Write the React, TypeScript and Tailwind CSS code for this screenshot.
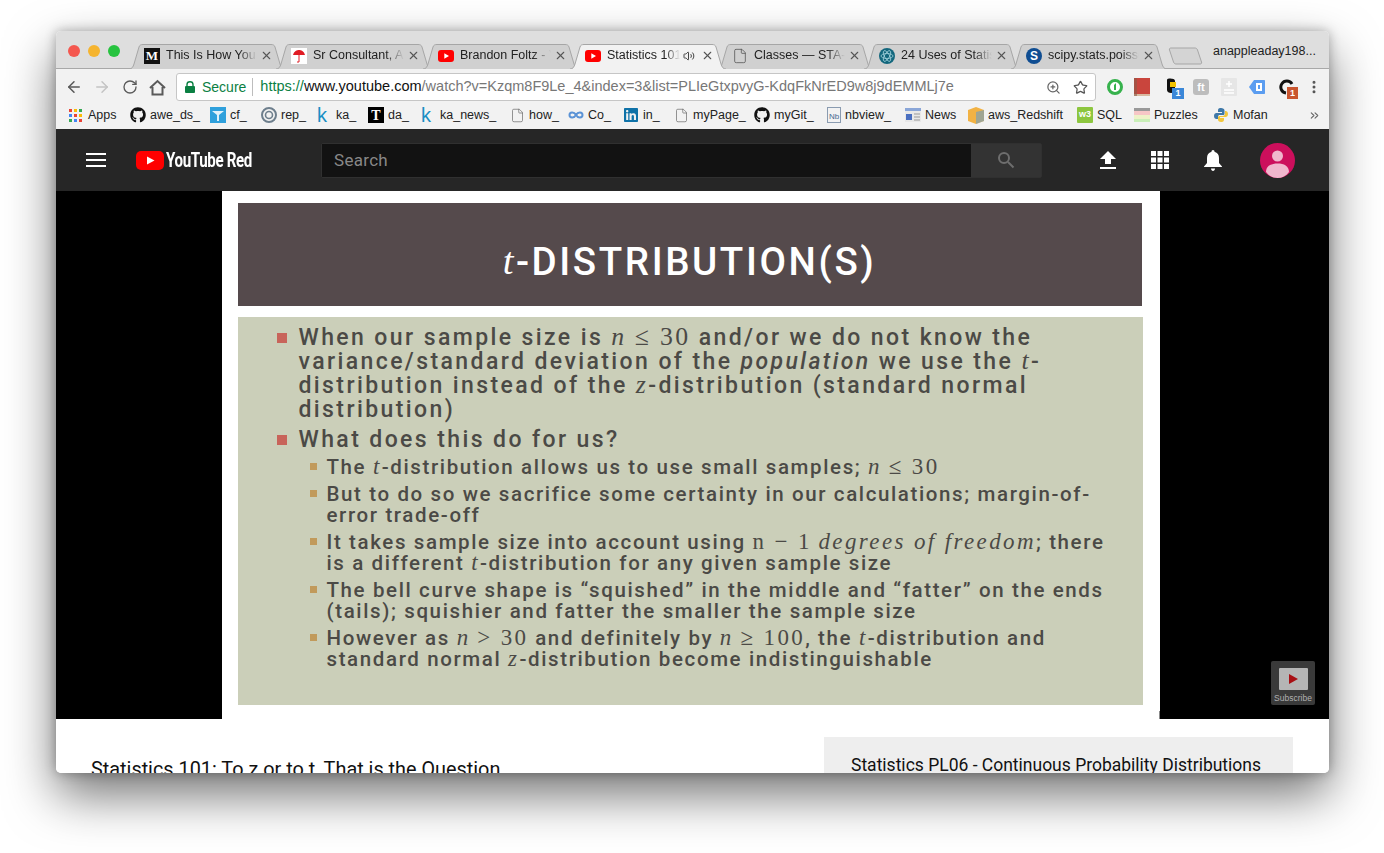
import React from "react";
import { ArrowLeft, ArrowRight, RotateCw, ZoomIn, Star, MoreVertical, X, Volume2, File, ChevronsRight } from "lucide-react";
import { FaGithub, FaLinkedin } from "react-icons/fa";

const YtIcon = () => (
  <svg width="16" height="12" viewBox="0 0 16 12" className="shrink-0">
    <rect width="16" height="12" rx="3" fill="#f00" />
    <path d="M6.3 3.2 L11 6 L6.3 8.8 Z" fill="#fff" />
  </svg>
);

const tabs: { icon: React.ReactNode; title: string; active?: boolean; sound?: boolean }[] = [
  {
    icon: <span className="flex h-4 w-4 shrink-0 items-center justify-center bg-[#111] font-['Liberation_Serif',serif] text-[13px] font-bold text-white">M</span>,
    title: "This Is How You Lie with Statistics",
  },
  {
    icon: (
      <svg width="16" height="16" viewBox="0 0 16 16" className="shrink-0">
        <rect width="16" height="16" fill="#fff" />
        <path d="M2 7 C3 3 6 2 8 2 C10 2 13 3 14 7 Z" fill="#e01c24" />
        <path d="M8 6 V14 H6" fill="none" stroke="#e01c24" strokeWidth="1" />
      </svg>
    ),
    title: "Sr Consultant, Analytics",
  },
  { icon: <YtIcon />, title: "Brandon Foltz - YouTube" },
  { icon: <YtIcon />, title: "Statistics 101: To z", active: true, sound: true },
  { icon: <File size={16} strokeWidth={1.2} className="shrink-0 text-[#555]" />, title: "Classes — STA-680" },
  {
    icon: (
      <svg width="16" height="16" viewBox="0 0 16 16" className="shrink-0">
        <circle cx="8" cy="8" r="8" fill="#13677d" />
        <g fill="none" stroke="#9fd0da" strokeWidth="0.8">
          <ellipse cx="8" cy="8" rx="6" ry="2.5" />
          <ellipse cx="8" cy="8" rx="6" ry="2.5" transform="rotate(60 8 8)" />
          <ellipse cx="8" cy="8" rx="6" ry="2.5" transform="rotate(120 8 8)" />
        </g>
      </svg>
    ),
    title: "24 Uses of Statistics",
  },
  {
    icon: (
      <span className="flex h-4 w-4 shrink-0 items-center justify-center rounded-full bg-[#0f4d92] font-['Liberation_Sans',sans-serif] text-[12px] font-bold text-white">S</span>
    ),
    title: "scipy.stats.poisson",
  },
];

function Tab({ icon, title, active, sound }: (typeof tabs)[number]) {
  return (
    <div className={`relative -ml-[9px] flex h-[25px] w-[156px] shrink-0 items-center pb-[2px] pl-[15px] pr-[12px] first:ml-0 ${active ? "z-10" : ""}`}>
      <svg width="156" height="25" viewBox="0 0 156 25" className="absolute left-0 top-0">
        <path
          d="M0 25 C3 25 4 23 5 20 L10 3 C10.6 1 12 0.5 14 0.5 H142 C144 0.5 145.4 1 146 3 L151 20 C152 23 153 25 156 25"
          fill={active ? "#f2f2f2" : "#d0d0d0"}
          stroke="#a6a6a6"
          strokeWidth="1"
        />
      </svg>
      <span className="relative flex min-w-0 flex-1 items-center">
        {icon}
        <span className="ml-[6px] min-w-0 flex-1 overflow-hidden whitespace-nowrap text-[12.5px] text-[#222] [mask-image:linear-gradient(to_right,black_80%,transparent)]">
          {title}
        </span>
        {sound && <Volume2 size={12} className="mx-[3px] shrink-0 text-[#444]" />}
        <X size={13} strokeWidth={2} className="ml-[3px] shrink-0 text-[#555]" />
      </span>
    </div>
  );
}

const Kay = () => <span className="-ml-[3px] w-[15px] shrink-0 text-[20px] leading-none text-[#1a8fc4]">k</span>;
const Doc = () => <File size={15} strokeWidth={1.1} className="shrink-0 text-[#666]" />;

const bookmarks: { w: string; gap?: string; icon: React.ReactNode; label: string }[] = [
  {
    w: "w-[61px]",
    gap: "gap-[6px]",
    label: "Apps",
    icon: (
      <span className="grid h-[13px] w-[13px] shrink-0 grid-cols-3 gap-[2px]">
        {["#ea4335", "#fbbc05", "#34a853", "#4285f4", "#ea4335", "#fbbc05", "#34a853", "#4285f4", "#ea4335"].map((c, i) => (
          <svg key={i} viewBox="0 0 3 3" className="h-[3px] w-[3px]"><rect width="3" height="3" fill={c} /></svg>
        ))}
      </span>
    ),
  },
  { w: "w-[80px]", label: "awe_ds_", icon: <FaGithub size={16} className="shrink-0 text-[#111]" /> },
  {
    w: "w-[51px]",
    label: "cf_",
    icon: (
      <svg width="16" height="16" viewBox="0 0 16 16" className="shrink-0">
        <rect width="16" height="16" fill="#2fa0dc" />
        <path d="M2 4 H14 L9 8 V14 H7 V8 Z" fill="#fff" opacity="0.85" />
      </svg>
    ),
  },
  {
    w: "w-[59px]",
    label: "rep_",
    icon: (
      <svg width="16" height="16" viewBox="0 0 16 16" className="shrink-0">
        <circle cx="8" cy="8" r="7" fill="none" stroke="#6e7f8d" strokeWidth="2" />
        <circle cx="8" cy="8" r="3.5" fill="none" stroke="#6e7f8d" strokeWidth="1.6" />
      </svg>
    ),
  },
  { w: "w-[48px]", label: "ka_", icon: <Kay /> },
  {
    w: "w-[56px]",
    label: "da_",
    icon: <span className="flex h-4 w-4 shrink-0 items-center justify-center bg-black font-['Liberation_Serif',serif] text-[14px] font-bold text-white">T</span>,
  },
  { w: "w-[86px]", label: "ka_news_", icon: <Kay /> },
  { w: "w-[58px]", label: "how_", icon: <Doc /> },
  {
    w: "w-[55px]",
    label: "Co_",
    icon: (
      <svg width="16" height="16" viewBox="0 0 16 16" className="shrink-0">
        <path d="M8 8 C6 4.5 1.5 5 1.5 8 C1.5 11 6 11.5 8 8 C10 4.5 14.5 5 14.5 8 C14.5 11 10 11.5 8 8" fill="none" stroke="#5b93d6" strokeWidth="2" />
      </svg>
    ),
  },
  { w: "w-[51px]", label: "in_", icon: <FaLinkedin size={16} className="shrink-0 text-[#0f72a8]" /> },
  { w: "w-[80px]", label: "myPage_", icon: <Doc /> },
  { w: "w-[73px]", label: "myGit_", icon: <FaGithub size={16} className="shrink-0 text-[#111]" /> },
  {
    w: "w-[78px]",
    label: "nbview_",
    icon: (
      <span className="flex h-4 w-[14px] shrink-0 items-end justify-center border border-[#8a9bb0] text-[8px] leading-[10px] text-[#46678e]">Nb</span>
    ),
  },
  {
    w: "w-[63px]",
    label: "News",
    icon: (
      <svg width="16" height="14" viewBox="0 0 16 14" className="shrink-0">
        <rect width="16" height="14" fill="#e8e8e8" />
        <rect width="16" height="3" fill="#8aa6d8" />
        <rect x="1" y="6" width="6" height="6" fill="#4a6fc0" />
        <path d="M9 6 H15 M9 9 H15 M9 12 H15" stroke="#999" />
      </svg>
    ),
  },
  {
    w: "w-[109px]",
    label: "aws_Redshift",
    icon: (
      <svg width="16" height="18" viewBox="0 0 16 18" className="shrink-0">
        <path d="M0 4 L8 1 L16 4 V15 L8 18 L0 15 Z" fill="#f2b243" />
        <path d="M8 6 L16 4 V15 L8 18 Z" fill="#5b9bd5" opacity="0.55" />
      </svg>
    ),
  },
  {
    w: "w-[57px]",
    label: "SQL",
    icon: <span className="flex h-4 w-4 shrink-0 items-center justify-center rounded-[1px] bg-[#8dc63f] text-[9px] font-bold text-white">w3</span>,
  },
  {
    w: "w-[79px]",
    label: "Puzzles",
    icon: (
      <svg width="16" height="16" viewBox="0 0 16 16" className="shrink-0">
        <rect y="1" width="16" height="3" fill="#999" />
        <rect y="4" width="16" height="4" fill="#f6c6c6" />
        <rect y="8" width="16" height="4" fill="#eef2c8" />
        <rect y="12" width="16" height="3" fill="#c9efb8" />
      </svg>
    ),
  },
  {
    w: "w-[70px]",
    label: "Mofan",
    icon: (
      <svg width="16" height="16" viewBox="0 0 16 16" className="shrink-0">
        <path d="M8 1 C5 1 5 2.500 5 4 V5 H9 V6 H3.500 C2 6 1 7 1 9 C1 11 2 12 3.500 12 H5 V9.500 C5 8.500 6 8 7 8 H10 C11 8 11.500 7.500 11.500 6.500 V3.500 C11.500 2 10 1 8 1 Z" fill="#3f78a8" />
        <path d="M8 15 C11 15 11 13.500 11 12 V11 H7 V10 H12.500 C14 10 15 9 15 7 C15 5 14 4 12.500 4 H12 V6.500 C12 8 11 9 9.500 9 H6.500 C5.500 9 5 9.500 5 10.500 V12.500 C5 14 6 15 8 15 Z" fill="#f2c63c" />
      </svg>
    ),
  },
];

const M = ({ children }: { children: React.ReactNode }) => (
  <span className="font-['Liberation_Serif',serif] text-[1.12em] font-normal italic leading-[0] tracking-[2.4px]">{children}</span>
);
const R = ({ children }: { children: React.ReactNode }) => (
  <span className="font-['Liberation_Serif',serif] text-[1.12em] font-normal leading-[0] tracking-[2.4px]">{children}</span>
);

function Top({ children }: { children: React.ReactNode }) {
  return (
    <div className="flex">
      <span className="ml-[39px] mt-[7px] h-[10px] w-[10px] shrink-0 bg-[#c8645a]" />
      <p className="ml-[12px] whitespace-nowrap text-[23px] leading-[24px] tracking-[2.4px]">{children}</p>
    </div>
  );
}

function Sub({ children }: { children: React.ReactNode }) {
  return (
    <div className="flex">
      <span className="ml-[72px] mt-[6px] h-[7px] w-[7px] shrink-0 bg-[#c19a5b]" />
      <p className="ml-[10px] whitespace-nowrap text-[20.5px] leading-[21px] tracking-[1.62px]">{children}</p>
    </div>
  );
}

export default function App() {
  return (
    <div className="h-[853px] w-[1384px] overflow-hidden bg-white pl-[56px] pt-[31px] font-['Liberation_Sans',sans-serif]">
      <div className="flex h-[742px] w-[1273px] flex-col overflow-hidden rounded-[5px] bg-white shadow-[0_22px_50px_rgba(0,0,0,0.55),0_0_12px_rgba(0,0,0,0.3)]">
        {/* Title bar with traffic lights and tabs */}
        <div className="flex h-[38px] shrink-0 items-end border-b border-[#a8a8a8] bg-[#dedede]">
          <div className="mb-[11px] ml-[12px] flex gap-[8px] self-end">
            <span className="h-[12px] w-[12px] rounded-full bg-[#f4574f]" />
            <span className="h-[12px] w-[12px] rounded-full bg-[#f5b42f]" />
            <span className="h-[12px] w-[12px] rounded-full bg-[#27c33f]" />
          </div>
          <div className="relative top-px ml-[9px] flex items-end">
            {tabs.map((t) => (
              <Tab key={t.title} {...t} />
            ))}
          </div>
          <svg width="36" height="18" viewBox="0 0 36 18" className="mb-[3px] ml-[1px] shrink-0">
            <path d="M3 1 H27 C28 1 29 1.5 29.5 3 L33.5 15 C34 16.5 33 17 32 17 H8 C7 17 6 16.5 5.500 15 L1.500 3 C1 1.500 2 1 3 1 Z" fill="#d4d4d4" stroke="#a6a6a6" />
          </svg>
          <span className="mb-[7px] ml-[9px] self-end text-[12.5px] text-[#222]">anappleaday198...</span>
        </div>

        {/* Address toolbar */}
        <div className="flex h-[34px] shrink-0 items-center bg-[#f2f2f2] pt-[2px]">
          <ArrowLeft size={18} strokeWidth={2} className="ml-[9px] text-[#5a5a5a]" />
          <ArrowRight size={18} strokeWidth={2} className="ml-[10px] text-[#c4c4c4]" />
          <RotateCw size={16} strokeWidth={2} className="ml-[11px] text-[#5a5a5a]" />
          <svg width="17" height="17" viewBox="0 0 17 17" className="ml-[11px]" fill="none" stroke="#5a5a5a" strokeWidth="2">
            <path d="M1 9 L8.500 2 L16 9 M3.500 8 V15.500 H13.500 V8" />
          </svg>
          <div className="ml-[10px] flex h-[28px] w-[920px] items-center rounded-[3px] border border-[#c6c6c6] bg-white text-[14px]">
            <svg width="10" height="12" viewBox="0 0 10 12" className="ml-[8px]">
              <path d="M2 5 V3.500 C2 1.800 3.300 .8 5 .8 C6.700 .8 8 1.800 8 3.500 V5" fill="none" stroke="#0b8043" strokeWidth="1.400" />
              <rect y="5" width="10" height="7" rx="1" fill="#0b8043" />
            </svg>
            <span className="ml-[7px] text-[#0b8043]">Secure</span>
            <span className="ml-[6px] h-[18px] w-px bg-[#bdbdbd]" />
            <span className="ml-[7px] whitespace-nowrap text-[14.5px] text-[#777]">
              <span className="text-[#0b8043]">https://</span>
              <span className="text-[#111]">www.youtube.com</span>
              /watch?v=Kzqm8F9Le_4&amp;index=3&amp;list=PLIeGtxpvyG-KdqFkNrED9w8j9dEMMLj7e
            </span>
            <ZoomIn size={15} strokeWidth={2} className="ml-auto text-[#666]" />
            <Star size={15} strokeWidth={2} className="ml-[12px] mr-[7px] text-[#555]" />
          </div>
          <div className="ml-[9px] flex flex-1 items-center">
            <svg width="18" height="18" viewBox="0 0 18 18" className="ml-[1px]">
              <circle cx="9" cy="9" r="6.500" fill="#fff" stroke="#37b24d" strokeWidth="3" />
              <path d="M8 12 V7 L10 5 V12 Z" fill="#37b24d" />
            </svg>
            <svg width="16" height="18" viewBox="0 0 16 18" className="ml-[10px]">
              <rect width="16" height="16" fill="#c9453d" />
              <rect y="16" width="16" height="2" fill="#d8b9a0" />
              <rect width="3" height="18" fill="#8c5c4a" opacity="0.6" />
            </svg>
            <div className="relative ml-[14px] h-[18px] w-[16px]">
              <svg width="16" height="18" viewBox="0 0 16 18"><path d="M3 2 C3 0 11 0 11 3 V12 C11 16 3 16 3 12 Z" fill="#111" /><rect x="6" y="4" width="6" height="5" fill="#f2c200" /></svg>
              <span className="absolute -bottom-[3px] -right-[4px] flex h-[11px] w-[12px] items-center justify-center bg-[#3b87d8] text-[9px] font-bold leading-none text-white">1</span>
            </div>
            <span className="ml-[13px] flex h-[16px] w-[16px] items-center justify-center rounded-[3px] bg-[#bdbdbd] text-[11px] font-bold text-white">ft</span>
            <svg width="16" height="18" viewBox="0 0 16 18" className="ml-[12px]">
              <rect width="16" height="18" rx="1" fill="#e6e6e6" />
              <path d="M5 6 H11 M8 3 V9 M3 12 H13 M3 15 H13" stroke="#fff" strokeWidth="1.500" />
            </svg>
            <svg width="16" height="14" viewBox="0 0 16 14" className="ml-[12px]">
              <path d="M5 0 H15 C15.600 0 16 .4 16 1 V13 C16 13.600 15.600 14 15 14 H5 L0 7 Z" fill="#5b9df0" />
              <rect x="7" y="3" width="6" height="8" fill="#fff" />
              <rect x="9" y="5" width="2" height="4" fill="#5b9df0" />
            </svg>
            <div className="relative ml-[14px] h-[18px] w-[16px]">
              <svg width="16" height="18" viewBox="0 0 16 18"><path d="M13 6 A6 6 0 1 0 7 15" fill="none" stroke="#111" strokeWidth="3" /></svg>
              <span className="absolute -bottom-[3px] -right-[3px] flex h-[12px] w-[11px] items-center justify-center bg-[#c9562f] text-[9px] font-bold leading-none text-white">1</span>
            </div>
            <MoreVertical size={16} strokeWidth={2.500} className="ml-[11px] text-[#555]" />
          </div>
        </div>

        {/* Bookmarks bar */}
        <div className="flex h-[26px] shrink-0 items-center bg-[#f2f2f2] pb-[2px] pl-[13px] text-[12.5px] text-[#222]">
          {bookmarks.map((b) => (
            <div key={b.label} className={`flex shrink-0 items-center whitespace-nowrap ${b.gap ?? "gap-[4px]"} ${b.w}`}>
              {b.icon}
              <span>{b.label}</span>
            </div>
          ))}
          <ChevronsRight size={13} className="ml-[25px] text-[#666]" />
        </div>

        {/* YouTube masthead */}
        <div className="flex h-[62px] shrink-0 items-center bg-[#262626]">
          <svg width="20" height="14" viewBox="0 0 20 14" className="ml-[30px]">
            <path d="M0 1 H20 M0 7 H20 M0 13 H20" stroke="#fff" strokeWidth="2" />
          </svg>
          <svg width="28" height="19" viewBox="0 0 28 19" className="ml-[30px]">
            <rect width="28" height="19" rx="5" fill="#f00" />
            <path d="M11 5.500 L18.500 9.500 L11 13.500 Z" fill="#fff" />
          </svg>
          <div className="ml-[2px] w-[86px] pt-[2px]">
            <span className="block origin-left scale-x-[0.72] whitespace-nowrap font-['Roboto',sans-serif] text-[21px] font-bold tracking-[-0.5px] text-white">YouTube Red</span>
          </div>
          <div className="ml-[69px] flex h-[35px] w-[721px] rounded-[2px] border border-[#303030]">
            <div className="flex w-[649px] items-center bg-[#121212] pl-[12px] pt-[2px] font-['Roboto',sans-serif] text-[17px] tracking-[0.3px] text-[#888]">Search</div>
            <div className="flex flex-1 items-center justify-center bg-[#333]">
              <svg width="18" height="18" viewBox="0 0 18 18" fill="none" stroke="#6e6e6e" strokeWidth="2">
                <circle cx="7" cy="7" r="5" />
                <path d="M11 11 L16.500 16.500" />
              </svg>
            </div>
          </div>
          <svg width="16" height="19" viewBox="0 0 16 19" className="ml-[58px]">
            <path d="M8 0 L16 8 H11 V13 H5 V8 H0 Z M0 16 H16 V18 H0 Z" fill="#fff" />
          </svg>
          <svg width="18" height="18" viewBox="0 0 18 18" className="ml-[35px]" fill="#fff">
            <path d="M0 0 H5 V5 H0 Z M6.500 0 H11.500 V5 H6.500 Z M13 0 H18 V5 H13 Z M0 6.500 H5 V11.500 H0 Z M6.500 6.500 H11.500 V11.500 H6.500 Z M13 6.500 H18 V11.500 H13 Z M0 13 H5 V18 H0 Z M6.500 13 H11.500 V18 H6.500 Z M13 13 H18 V18 H13 Z" />
          </svg>
          <svg width="18" height="21" viewBox="0 0 18 21" className="ml-[35px]" fill="#fff">
            <path d="M9 0 C10 0 10.500 .8 10.500 1.800 C13.500 2.600 15 5 15 8 V13 L18 16.500 V17 H0 V16.500 L3 13 V8 C3 5 4.500 2.600 7.500 1.800 C7.500 .8 8 0 9 0 Z M7 18.500 H11 C11 20 10 21 9 21 C8 21 7 20 7 18.500 Z" />
          </svg>
          <svg width="35" height="35" viewBox="0 0 35 35" className="ml-[38px]">
            <circle cx="17.500" cy="17.500" r="17.500" fill="#cc0f5c" />
            <circle cx="17.500" cy="13" r="5.500" fill="#f0b7cd" />
            <path d="M6 29 C6 23 11 20.500 17.500 20.500 C24 20.500 29 23 29 29 C26 33 22 35 17.500 35 C13 35 9 33 6 29 Z" fill="#f0b7cd" />
          </svg>
        </div>

        {/* Video player with the slide */}
        <div className="relative flex h-[528px] shrink-0 justify-center bg-black pr-[2px]">
          <div className="ml-[-2px] flex w-[938px] flex-col bg-white px-[16px] pt-[12px] font-['Roboto',sans-serif]">
            <div className="flex h-[103px] w-[904px] items-center justify-center bg-[#554a4c] pt-[14px] text-[38.500px] font-medium tracking-[2.6px] text-white">
              <span className="font-['Liberation_Serif',serif] font-normal italic">t</span>-DISTRIBUTION(S)
            </div>
            <div className="mt-[11px] flex h-[388px] w-[905px] flex-col bg-[#cbcfb9] pt-[9px] font-medium text-[#4b4a46]">
              <Top>
                When our sample size is <M>n</M> <R>≤ 30</R> and/or we do not know the
                <br />
                variance/standard deviation of the <em>population</em> we use the <M>t</M>-
                <br />
                distribution instead of the <M>z</M>-distribution (standard normal
                <br />
                distribution)
              </Top>
              <div className="mt-[6px]">
                <Top>What does this do for us?</Top>
              </div>
              <div className="mt-[5px] flex flex-col gap-[6px]">
                <Sub>
                  The <M>t</M>-distribution allows us to use small samples; <M>n</M> <R>≤ 30</R>
                </Sub>
                <Sub>
                  But to do so we sacrifice some certainty in our calculations; margin-of-
                  <br />
                  error trade-off
                </Sub>
                <Sub>
                  It takes sample size into account using <R>n − 1</R> <M>degrees of freedom</M>; there
                  <br />
                  is a different <M>t</M>-distribution for any given sample size
                </Sub>
                <Sub>
                  The bell curve shape is “squished” in the middle and “fatter” on the ends
                  <br />
                  (tails); squishier and fatter the smaller the sample size
                </Sub>
                <Sub>
                  However as <M>n</M> <R>&gt; 30</R> and definitely by <M>n</M> <R>≥ 100</R>, the <M>t</M>-distribution and
                  <br />
                  standard normal <M>z</M>-distribution become indistinguishable
                </Sub>
              </div>
            </div>
          </div>
          <span className="absolute bottom-0 left-[1103px] h-[8px] w-px bg-[#8a8a8a]" />
          {/* Subscribe watermark */}
          <div className="absolute bottom-[14px] right-[14px] flex h-[44px] w-[44px] flex-col items-center rounded-[2px] bg-[#3a3a3a] pt-[7px]">
            <div className="flex h-[22px] w-[29px] items-center justify-center rounded-[1px] bg-[#b5b5b5]">
              <svg width="9" height="10" viewBox="0 0 9 10"><path d="M0 0 L9 5 L0 10 Z" fill="#a80f14" /></svg>
            </div>
            <span className="mt-[3px] text-[8.500px] leading-[10px] text-[#b0b0b0]">Subscribe</span>
          </div>
        </div>

        {/* Below the player */}
        <div className="relative flex flex-1 justify-between overflow-hidden bg-white pl-[35px] pr-[36px] font-['Roboto',sans-serif] text-[#111]">
          <p className="mt-[39px] whitespace-nowrap text-[19.850px] leading-[24px]">Statistics 101: To z or to t, That is the Question</p>
          <div className="mt-[18px] h-[60px] w-[469px] bg-[#eeeeee] pl-[27px] pt-[16px] text-[17.500px] leading-[24px]">
            Statistics PL06 - Continuous Probability Distributions
          </div>
        </div>
      </div>
    </div>
  );
}
